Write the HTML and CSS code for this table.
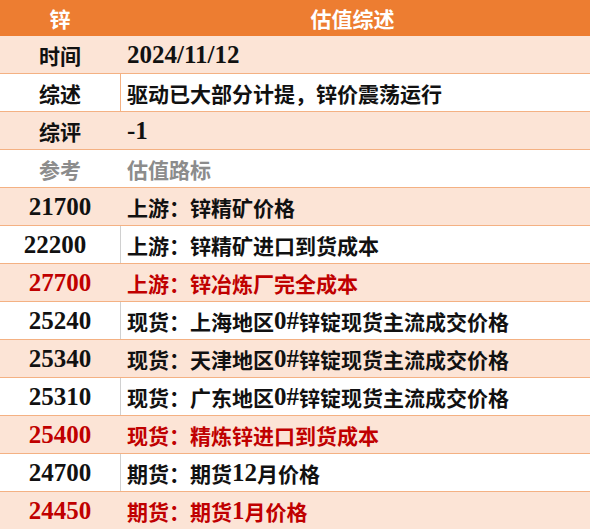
FILE: index.html
```html
<!DOCTYPE html>
<html>
<head>
<meta charset="utf-8">
<link rel="stylesheet" href="styles.css">
</head>
<body>
<div class="sheet">
  <div class="row head"><div class="c1">锌</div><div class="c2 center">估值综述</div></div>
  <div class="row fill"><div class="c1">时间</div><div class="c2"><span class="num">2024/11/12</span></div></div>
  <div class="row white vline-peach"><div class="c1">综述</div><div class="c2">驱动已大部分计提，锌价震荡运行</div></div>
  <div class="row fill"><div class="c1">综评</div><div class="c2"><span class="num">-1</span></div></div>
  <div class="row white gray novline"><div class="c1">参考</div><div class="c2">估值路标</div></div>
  <div class="row fill"><div class="c1 num">21700</div><div class="c2">上游：锌精矿价格</div></div>
  <div class="row white"><div class="c1 num shift">22200</div><div class="c2">上游：锌精矿进口到货成本</div></div>
  <div class="row fill red"><div class="c1 num">27700</div><div class="c2">上游：锌冶炼厂完全成本</div></div>
  <div class="row white"><div class="c1 num">25240</div><div class="c2">现货：上海地区<span class="num">0#</span>锌锭现货主流成交价格</div></div>
  <div class="row fill"><div class="c1 num">25340</div><div class="c2">现货：天津地区<span class="num">0#</span>锌锭现货主流成交价格</div></div>
  <div class="row white"><div class="c1 num">25310</div><div class="c2">现货：广东地区<span class="num">0#</span>锌锭现货主流成交价格</div></div>
  <div class="row fill red"><div class="c1 num">25400</div><div class="c2">现货：精炼锌进口到货成本</div></div>
  <div class="row white"><div class="c1 num">24700</div><div class="c2">期货：期货<span class="num">12</span>月价格</div></div>
  <div class="row fill red"><div class="c1 num">24450</div><div class="c2">期货：期货<span class="num">1</span>月价格</div></div>
</div>
</body>
</html>
```
FILE: styles.css
```css
html, body {
  margin: 0;
  padding: 0;
  background: #ffffff;
}
.sheet {
  width: 590px;
  font-family: "Liberation Serif", "Noto Sans CJK SC", serif;
  font-weight: 700;
  font-size: 21px;
  color: #111111;
}
.row {
  display: flex;
  height: 37px;
  border-bottom: 1px solid #f4b183;
}
.row .c1 {
  width: 121px;
  flex: none;
  display: flex;
  align-items: center;
  justify-content: center;
  box-sizing: border-box;
}
.row .c2 {
  flex: 1;
  display: flex;
  align-items: center;
  padding-left: 6px;
  white-space: nowrap;
}
.row .c2.center {
  justify-content: center;
  padding-left: 0;
  padding-right: 6px;
}
.head {
  height: 36px;
  border-bottom: none;
  background: #ed7d31;
  color: #ffffff;
}
.fill {
  background: #fce4d6;
}
.white .c1 {
  border-right: 1px solid #d0d0d0;
}
.white.vline-peach .c1 {
  border-right-color: #f4b183;
}
.white.novline .c1 {
  border-right-color: transparent;
}
.fill .c1, .head .c1 {
  border-right: 1px solid transparent;
}
.gray {
  color: #8c8c8c;
}
.red {
  color: #c00000;
}
.num {
  font-family: "Liberation Serif", serif;
  font-size: 25px;
}
.c1.num {
  padding-top: 1px;
}
.c1.shift {
  padding-right: 10px;
}
```
